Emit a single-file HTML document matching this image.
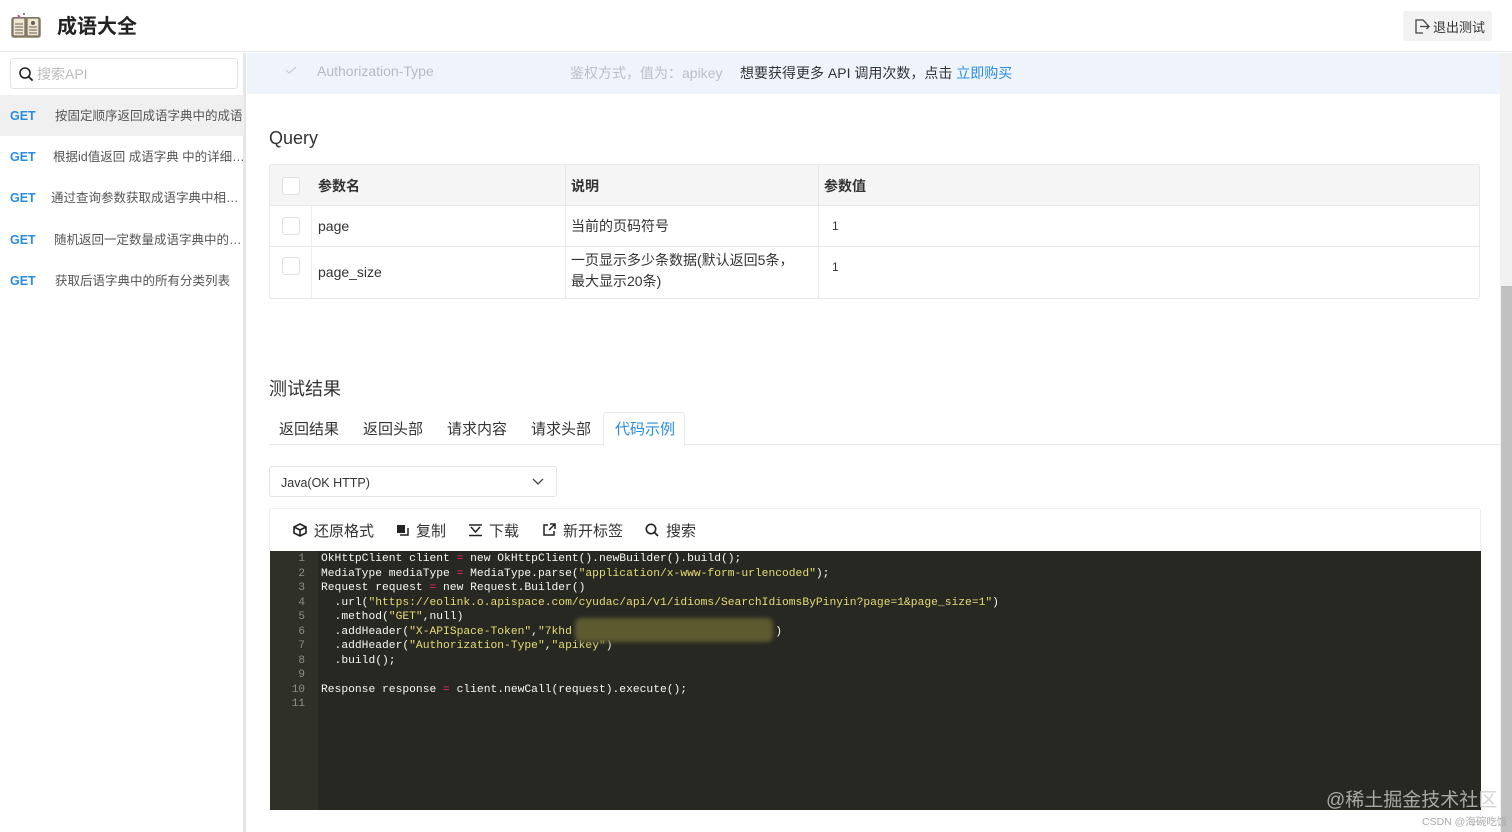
<!DOCTYPE html>
<html><head><meta charset="utf-8"><style>
*{margin:0;padding:0;box-sizing:border-box}
body{width:1512px;height:832px;overflow:hidden;background:#fff;font-family:"Liberation Sans","Noto Sans CJK SC",sans-serif;color:#333;position:relative}
.abs{position:absolute}
.hdr{left:0;top:0;width:1512px;height:52px;border-bottom:1px solid #e4e7ed;background:#fff}
.title{left:57px;top:10px;font-size:20px;font-weight:bold;color:#222}
.exit{left:1403px;top:11px;width:89px;height:30px;background:#f2f2f2;border-radius:3px;font-size:13px;color:#333;padding:6px 0 0 30px}
.side{left:0;top:53px;width:246px;height:779px;border-right:3px solid #e6e6e6;background:#fff}
.search{left:10px;top:58px;width:228px;height:31px;border:1px solid #e3e3e3;border-radius:3px;background:#fff}
.search span{position:absolute;left:26px;top:5px;font-size:14px;color:#bbb}
.item{left:0;width:244px;height:41px;font-size:12.5px;color:#555;white-space:nowrap}
.item b{position:absolute;left:10px;top:14px;color:#2a8ce0;font-size:12.5px}
.item span{position:absolute;top:10px}
.topbar{left:247px;top:53px;width:1253px;height:41px;background:#eff4fc}
.h2{font-size:18px;color:#333}
.tbl{left:269px;top:164px;width:1211px;height:135px;border:1px solid #e8e8e8;border-radius:3px}
.cb{position:absolute;width:18px;height:18px;border:1px solid #e0e0e0;border-radius:3px;background:#fff}
.tabs{left:269px;top:410px;font-size:15px;color:#333}
.sel{left:269px;top:466px;width:288px;height:31px;border:1px solid #e4e4e4;border-radius:3px;font-size:12.5px;padding:9px 0 0 11px}
.tool{left:269px;top:508px;width:1212px;height:44px;border:1px solid #eee;border-bottom:none;border-radius:3px 3px 0 0;font-size:15px}
.ed{left:270px;top:551px;width:1211px;height:259px;background:#272822}
.gut{left:270px;top:551px;width:48px;height:259px;background:#2f3129}
.code{left:321px;top:552px;font-family:"Liberation Mono",monospace;font-size:11.3px;line-height:14.5px;color:#f8f8f2;white-space:pre}
.ln{left:270px;top:552px;width:35px;text-align:right;font-family:"Liberation Mono",monospace;font-size:11px;line-height:14.5px;color:#8f908a;white-space:pre}
.s{color:#e6db74}.o{color:#f92672}
</style></head><body>
<div class="abs hdr"></div>
<svg class="abs" style="left:10px;top:12px" width="32" height="28" viewBox="0 0 32 28"><rect x="1" y="5" width="30" height="21" rx="3" fill="#a89c86"/><rect x="3" y="6" width="12" height="18" fill="#efe7d4" stroke="#5a5146" stroke-width="1"/><rect x="17" y="6" width="12" height="18" fill="#efe7d4" stroke="#5a5146" stroke-width="1"/><path d="M5 12h8M5 15h8M5 18h8M5 21h8M19 15h8M19 18h8M19 21h8" stroke="#6a5f52" stroke-width="1"/><circle cx="23" cy="11" r="2" fill="#6a5f52"/><path d="M8 3l2 3" stroke="#b05a9a" stroke-width="2"/><circle cx="14" cy="2" r="1" fill="#555"/></svg>
<div class="abs title">成语大全</div>
<div class="abs exit"><svg class="abs" style="left:11px;top:8px" width="16" height="15" viewBox="0 0 16 15"><path d="M9 1H2v13h7M9 1l3 3v1M6 7.5h9M12.5 5l2.5 2.5-2.5 2.5" fill="none" stroke="#444" stroke-width="1.3"/></svg>退出测试</div>
<div class="abs side"></div>
<div class="abs search"><svg class="abs" style="left:8px;top:8px" width="15" height="15" viewBox="0 0 15 15"><circle cx="6" cy="6" r="5" fill="none" stroke="#222" stroke-width="1.6"/><path d="M9.6 9.6l4 4" stroke="#222" stroke-width="1.8"/></svg><span>搜索API</span></div>
<div class="abs item" style="top:95px;background:#f0f0f0"><b>GET</b><span style="left:55px">按固定顺序返回成语字典中的成语</span></div>
<div class="abs item" style="top:136px"><b>GET</b><span style="left:53px">根据id值返回 成语字典 中的详细…</span></div>
<div class="abs item" style="top:177px"><b>GET</b><span style="left:51px">通过查询参数获取成语字典中相…</span></div>
<div class="abs item" style="top:219px"><b>GET</b><span style="left:54px">随机返回一定数量成语字典中的…</span></div>
<div class="abs item" style="top:260px"><b>GET</b><span style="left:55px">获取后语字典中的所有分类列表</span></div>
<div class="abs topbar"></div>
<svg class="abs" style="left:285px;top:65px" width="12" height="10"><path d="M1 5l3 3 7-6" fill="none" stroke="#c8cdd6" stroke-width="1.2"/></svg>
<div class="abs" style="left:317px;top:63px;font-size:14px;color:#b4bac4">Authorization-Type</div>
<div class="abs" style="left:570px;top:63px;font-size:14px;color:#b9bec7">鉴权方式，值为：apikey</div>
<div class="abs" style="left:740px;top:63px;font-size:14px;color:#333">想要获得更多 API 调用次数，点击 <span style="color:#2a8ce0">立即购买</span></div>
<div class="abs h2" style="left:269px;top:128px">Query</div>
<div class="abs tbl">
 <div class="abs" style="left:0;top:0;width:1209px;height:41px;background:#f5f5f5;border-bottom:1px solid #e8e8e8"></div>
 <div class="abs" style="left:0;top:81px;width:1209px;height:1px;background:#e8e8e8"></div>
 <div class="abs" style="left:295px;top:0;width:1px;height:133px;background:#e8e8e8"></div>
 <div class="abs" style="left:548px;top:0;width:1px;height:133px;background:#e8e8e8"></div>
 <div class="abs" style="left:41px;top:41px;width:1px;height:92px;background:#eee"></div>
 <div class="cb" style="left:12px;top:12px"></div><div class="cb" style="left:12px;top:52px"></div><div class="cb" style="left:12px;top:92px"></div>
 <div class="abs" style="left:48px;top:11px;font-size:14px;font-weight:bold">参数名</div>
 <div class="abs" style="left:301px;top:11px;font-size:14px;font-weight:bold">说明</div>
 <div class="abs" style="left:554px;top:11px;font-size:14px;font-weight:bold">参数值</div>
 <div class="abs" style="left:48px;top:53px;font-size:14px">page</div>
 <div class="abs" style="left:301px;top:51px;font-size:14px">当前的页码符号</div>
 <div class="abs" style="left:562px;top:54px;font-size:12px">1</div>
 <div class="abs" style="left:48px;top:99px;font-size:14px">page_size</div>
 <div class="abs" style="left:301px;top:85px;font-size:14px;line-height:21px">一页显示多少条数据(默认返回5条，<br>最大显示20条)</div>
 <div class="abs" style="left:562px;top:95px;font-size:12px">1</div>
</div>
<div class="abs h2" style="left:269px;top:375px">测试结果</div>
<div class="abs" style="left:269px;top:444px;width:1231px;height:1px;background:#e8e8e8"></div>
<div class="abs" style="left:603px;top:412px;width:82px;height:34px;border:1px solid #e8e8e8;border-bottom:1px solid #fff;border-radius:3px 3px 0 0;background:#fff"></div>
<div class="abs tabs" style="left:279px;top:418px">返回结果</div>
<div class="abs tabs" style="left:363px;top:418px">返回头部</div>
<div class="abs tabs" style="left:447px;top:418px">请求内容</div>
<div class="abs tabs" style="left:531px;top:418px">请求头部</div>
<div class="abs tabs" style="left:615px;top:418px;color:#2a8ce0">代码示例</div>
<div class="abs sel">Java(OK HTTP)<svg class="abs" style="left:262px;top:11px" width="12" height="8"><path d="M1 1l5 5 5-5" fill="none" stroke="#444" stroke-width="1.3"/></svg></div>
<div class="abs tool">
 <svg class="abs" style="left:23px;top:14px" width="14" height="14" viewBox="0 0 14 14"><path d="M7 1l6 3v6l-6 3-6-3V4z M1 4l6 3 6-3M7 7v6" fill="none" stroke="#222" stroke-width="1.6"/></svg><span class="abs" style="left:44px;top:11px">还原格式</span>
 <svg class="abs" style="left:126px;top:15px" width="13" height="13"><rect x="1" y="1" width="8" height="8" fill="#222"/><path d="M4 11h8V4" fill="none" stroke="#222" stroke-width="1.5"/></svg><span class="abs" style="left:146px;top:11px">复制</span>
 <svg class="abs" style="left:198px;top:15px" width="15" height="13"><path d="M1 1h13M3 3l4.5 5L12 3M1 11.5h13" fill="none" stroke="#222" stroke-width="1.5"/></svg><span class="abs" style="left:219px;top:11px">下载</span>
 <svg class="abs" style="left:273px;top:14px" width="13" height="13"><path d="M5 2H1v10h10V8M7 1h5v5M12 1L6 7" fill="none" stroke="#222" stroke-width="1.5"/></svg><span class="abs" style="left:293px;top:11px">新开标签</span>
 <svg class="abs" style="left:375px;top:14px" width="14" height="14"><circle cx="6" cy="6" r="4.7" fill="none" stroke="#222" stroke-width="1.6"/><path d="M9.5 9.5l3.5 3.5" stroke="#222" stroke-width="1.7"/></svg><span class="abs" style="left:396px;top:11px">搜索</span>
</div>
<div class="abs ed"></div>
<div class="abs gut"></div>
<div class="abs ln">1
2
3
4
5
6
7
8
9
10
11</div>
<div class="abs code">OkHttpClient client <span class="o">=</span> new OkHttpClient().newBuilder().build();
MediaType mediaType <span class="o">=</span> MediaType.parse(<span class="s">"application/x-www-form-urlencoded"</span>);
Request request <span class="o">=</span> new Request.Builder()
  .url(<span class="s">"https://eolink.o.apispace.com/cyudac/api/v1/idioms/SearchIdiomsByPinyin?page=1&amp;page_size=1"</span>)
  .method(<span class="s">"GET"</span>,null)
  .addHeader(<span class="s">"X-APISpace-Token"</span>,<span class="s">"7khd</span>                              )
  .addHeader(<span class="s">"Authorization-Type"</span>,<span class="s">"apikey"</span>)
  .build();

Response response <span class="o">=</span> client.newCall(request).execute();
</div>
<div class="abs" style="left:575px;top:618px;width:198px;height:24px;background:#5e5a30;border-radius:6px;filter:blur(2px)"></div>
<div class="abs" style="left:1500px;top:53px;width:12px;height:779px;background:#f1f1f1"></div>
<div class="abs" style="left:1501px;top:286px;width:11px;height:546px;background:#c1c1c1"></div>
<div class="abs" style="left:1326px;top:785px;font-size:19px;color:rgba(200,200,200,0.8)">@稀土掘金技术社区</div>
<div class="abs" style="left:1422px;top:814px;font-size:10.5px;color:#aaa">CSDN @海碗吃饭</div>
</body></html>
